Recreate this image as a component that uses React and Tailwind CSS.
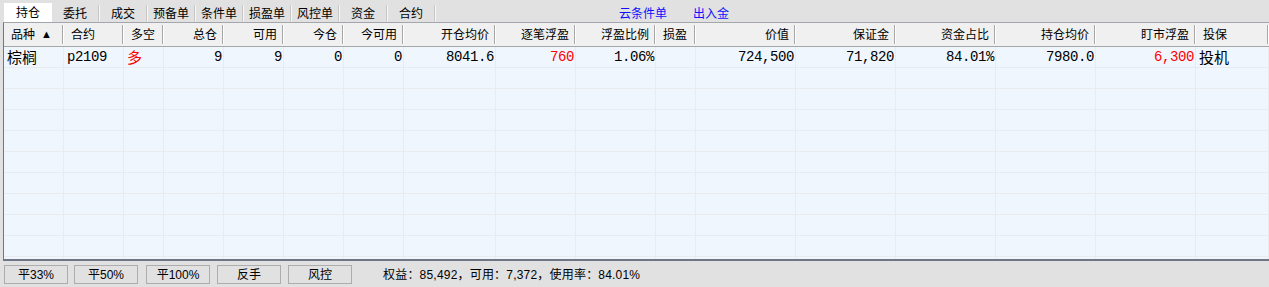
const cols = [
  { title: "品种", w: "w-[60px]", align: "left", sort: true },
  { title: "合约", w: "w-[60px]", align: "left" },
  { title: "多空", w: "w-[40px]", align: "left" },
  { title: "总仓", w: "w-[60px]", align: "right" },
  { title: "可用", w: "w-[60px]", align: "right" },
  { title: "今仓", w: "w-[60px]", align: "right" },
  { title: "今可用", w: "w-[60px]", align: "right" },
  { title: "开仓均价", w: "w-[92px]", align: "right" },
  { title: "逐笔浮盈", w: "w-[80px]", align: "right" },
  { title: "浮盈比例", w: "w-[80px]", align: "right" },
  { title: "损盈", w: "w-[40px]", align: "left" },
  { title: "价值", w: "w-[100px]", align: "right" },
  { title: "保证金", w: "w-[100px]", align: "right" },
  { title: "资金占比", w: "w-[100px]", align: "right" },
  { title: "持仓均价", w: "w-[100px]", align: "right" },
  { title: "盯市浮盈", w: "w-[100px]", align: "right" },
  { title: "投保", w: "flex-1", align: "left" },
];

// one position row, the rest of the grid is empty
const position = [
  { v: "棕榈", cjk: true },
  { v: "p2109" },
  { v: "多", cjk: true, red: true },
  { v: "9" },
  { v: "9" },
  { v: "0" },
  { v: "0" },
  { v: "8041.6" },
  { v: "760", red: true },
  { v: "1.06%" },
  { v: "" },
  { v: "724,500" },
  { v: "71,820" },
  { v: "84.01%" },
  { v: "7980.0" },
  { v: "6,300", red: true },
  { v: "投机", cjk: true },
];

const tabs = ["持仓", "委托", "成交", "预备单", "条件单", "损盈单", "风控单", "资金", "合约"];
const buttons = [
  { label: "平33%", ml: "ml-[4px]" },
  { label: "平50%", ml: "ml-[6px]" },
  { label: "平100%", ml: "ml-[8px]" },
  { label: "反手", ml: "ml-[7px]" },
  { label: "风控", ml: "ml-[7px]" },
];

function HeaderCell({ col }) {
  return (
    <div className={`${col.w} h-full flex items-center shrink-0`}>
      <div
        className={`flex-1 min-w-0 flex items-center whitespace-nowrap ${
          col.align === "right" ? "justify-end pr-[5px]" : "pl-[7px]"
        }`}
      >
        {col.title}
        {col.sort && <span className="ml-[6px] text-[11px] leading-none">▲</span>}
      </div>
      <div className="w-px h-[19px] bg-[#a7a7a7]" />
      <div className="w-px h-[19px] bg-white" />
    </div>
  );
}

function DataRow({ cells }) {
  return (
    <div className="h-[21px] flex border-b border-[#e9ebee] shrink-0">
      {cols.map((col, i) => {
        const cell = cells ? cells[i] : null;
        return (
          <div
            key={i}
            className={`${col.w} h-full shrink-0 flex items-center border-r border-[#e9ebee] whitespace-nowrap overflow-hidden ${
              col.align === "right" ? "justify-end pr-[1px]" : "pl-[3px]"
            } ${cell && cell.red ? "text-[#ff0000]" : "text-black"} ${
              cell && cell.cjk
                ? "text-[15px] font-['Noto_Sans_CJK_SC',sans-serif]"
                : "text-[14px] tracking-[-0.4px] font-['Liberation_Mono','Noto_Sans_CJK_SC',monospace]"
            }`}
          >
            {cell ? cell.v : ""}
          </div>
        );
      })}
    </div>
  );
}

export default function App() {
  const emptyRows = Array.from({ length: 10 });

  return (
    <div className="w-[1269px] h-[287px] bg-[#e1e1e1] flex flex-col overflow-hidden font-['Liberation_Sans','Noto_Sans_CJK_SC',sans-serif] text-[12px] text-black">
      {/* tab strip */}
      <div className="h-[22px] flex items-end pl-[4px] shrink-0">
        {tabs.map((t, i) =>
          i === 0 ? (
            <div key={t} className="w-[48px] h-[19px] bg-white flex items-center justify-center pt-[1px]">
              {t}
            </div>
          ) : (
            <div key={t} className="w-[48px] h-[19px] flex items-center">
              <div className="flex-1 text-center pt-[2px]">{t}</div>
              <div className="w-px h-[16px] bg-[#c6c6c6]" />
              <div className="w-px h-[16px] bg-[#f7f7f7]" />
            </div>
          )
        )}
        <div className="h-[19px] flex items-center pl-[183px] text-[#1010ff] pt-[2px]">
          <span>云条件单</span>
          <span className="ml-[26px]">出入金</span>
        </div>
      </div>

      {/* positions grid */}
      <div className="ml-[3px] h-[239px] shrink-0 flex flex-col border-l border-l-[#6f7784] border-t border-t-[#a3a6aa] border-b-2 border-b-[#6f7784] bg-[#eff6fd] overflow-hidden">
        <div className="h-[24px] flex items-center bg-[#f0f0f0] border-b border-[#a7a7a7] shrink-0">
          {cols.map((c) => (
            <HeaderCell key={c.title} col={c} />
          ))}
        </div>
        <DataRow cells={position} />
        {emptyRows.map((_, i) => (
          <DataRow key={i} />
        ))}
      </div>

      {/* actions + summary */}
      <div className="flex-1 flex items-start pt-[4px]">
        {buttons.map((b) => (
          <button
            key={b.label}
            className={`${b.ml} w-[64px] h-[19px] bg-[#e1e1e1] border border-[#adadad] flex items-center justify-center text-[12px]`}
          >
            {b.label}
          </button>
        ))}
        <div className="ml-[31px] h-[19px] flex items-center whitespace-nowrap tracking-[0.2px]">
          权益：85,492，可用：7,372，使用率：84.01%
        </div>
      </div>
    </div>
  );
}
